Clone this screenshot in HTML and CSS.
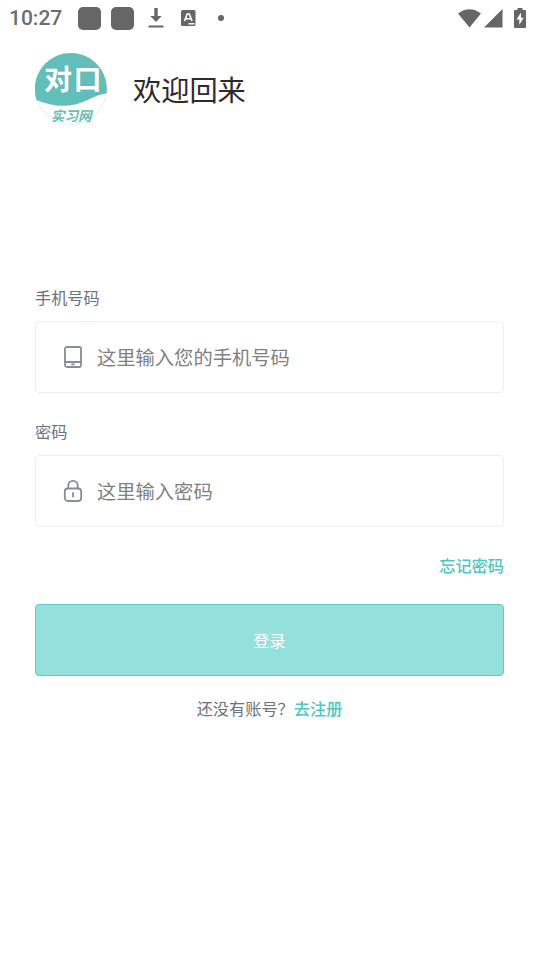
FILE: index.html
```html
<!DOCTYPE html>
<html lang="zh-CN">
<head>
<meta charset="utf-8">
<title>登录</title>
<link rel="stylesheet" href="styles.css">
</head>
<body>
<header class="status">
  <span class="time">10:27</span>
  <span class="app-block"></span>
  <span class="app-block second"></span>
  <svg class="download" width="16" height="20" viewBox="0 0 16 20"><path d="M6.3 0h3.4v8h4L8 14 2.3 8h4zM.5 17.5h15v2H.5z"/></svg>
  <svg class="letter" width="15" height="16" viewBox="0 0 15 16"><rect width="14.5" height="16" rx="1.5"/><path class="cut" d="M3.5 11 6.2 4h2.1L11 11M4.8 8.8h4.9M7.5 13.8h6"/></svg>
  <span class="dot"></span>
  <svg class="wifi" width="23" height="19" viewBox="0 0 23 19"><path d="M0 4.5Q11.5-4 23 4.5L11.5 18.5z"/></svg>
  <svg class="signal" width="19" height="19" viewBox="0 0 19 19"><path d="M18.5 0v18.5H0z"/></svg>
  <svg class="battery" width="12" height="20" viewBox="0 0 12 20"><path d="M3.5 0h5v2H11q1 0 1 1v16q0 1-1 1H1q-1 0-1-1V3q0-1 1-1h2.500z"/><path class="bolt" d="M7 4.500 2.500 11.500H5.300V17L9.700 9.800H7z"/></svg>
</header>
<main class="page">
  <div class="welcome">
    <svg class="logo" width="72" height="72" viewBox="0 0 72 72">
      <circle class="logo-base" cx="36" cy="36" r="35.5"/>
      <path class="logo-fill" d="M1.500 47A36 36 0 1 1 71.500 40.500C60 41.500 52 49 40 51.500 27 54.500 14 52 1.500 47z"/>
      <text class="logo-title" x="9" y="36.500">对</text>
      <text class="logo-title" x="38.500" y="36.500">口</text>
      <text class="logo-sub" x="16" y="67.500">实习网</text>
    </svg>
    <h1 class="title">欢迎回来</h1>
  </div>
  <form class="form">
    <label class="label" for="phone">手机号码</label>
    <div class="field">
      <svg class="field-icon" width="20" height="24" viewBox="0 0 20 24"><rect x="2" y="2" width="16" height="20" rx="1.800"/><path d="M2 17h16M9 19.300h2"/></svg>
      <input class="input" id="phone" type="tel" placeholder="这里输入您的手机号码">
    </div>
    <label class="label" for="password">密码</label>
    <div class="field">
      <svg class="field-icon" width="20" height="24" viewBox="0 0 20 24"><rect x="1.800" y="9.500" width="16.400" height="12.500" rx="3"/><path d="M5.300 9.500V6.500a4.700 4.700 0 0 1 9.400 0v3M10 14v3.500"/></svg>
      <input class="input" id="password" type="password" placeholder="这里输入密码">
    </div>
    <a class="link forgot">忘记密码</a>
    <button class="submit" type="button">登录</button>
    <p class="register">还没有账号？<a class="link">去注册</a></p>
  </form>
</main>
</body>
</html>
```
FILE: styles.css
```css
* { box-sizing: border-box; }
body {
  margin: 0;
  background: #fff;
  font-family: "Noto Sans CJK SC", sans-serif;
  color: #6b7280;
}
svg { display: block; flex: none; }
.status {
  display: flex;
  align-items: center;
  height: 36px;
  padding: 0 10px 0 9px;
  fill: #666;
}
.time {
  width: 69px;
  font: 500 21px/36px Roboto, sans-serif;
  color: #6c6c6c;
}
.app-block {
  width: 23px;
  height: 23px;
  border-radius: 5px;
  background: #666;
}
.second { margin-left: 10px; }
.download { margin-left: 14px; }
.letter { margin-left: 17px; }
.cut { fill: none; stroke: #fff; stroke-width: 1.6; }
.dot {
  width: 6px;
  height: 6px;
  margin-left: 22px;
  border-radius: 50%;
  background: #666;
}
.wifi { margin-left: auto; }
.signal { margin-left: 3px; }
.battery { margin-left: 11px; }
.bolt { fill: #fff; }
.page { padding: 17px 32px 0 35px; }
.welcome {
  display: flex;
  align-items: center;
  height: 72px;
}
.logo-base { fill: #fff; stroke: #e5eeee; stroke-width: 1; }
.logo-fill { fill: #62beb9; }
.logo-title { fill: #fff; font-size: 28px; font-weight: 700; }
.logo-sub {
  fill: #62beb9;
  font-size: 13.5px;
  font-weight: 700;
  font-style: italic;
}
.title {
  margin: 0 0 0 26px;
  font-size: 28.2px;
  font-weight: 400;
  line-height: 40px;
  color: #2e2a2b;
}
.form {
  display: flex;
  flex-direction: column;
  padding-top: 160px;
}
.label {
  height: 36px;
  font-size: 16.2px;
  line-height: 24px;
}
.field {
  display: flex;
  align-items: center;
  height: 72px;
  margin-bottom: 26px;
  padding: 0 27px;
  border: 1px solid #eee;
  border-radius: 4px;
}
.field-icon {
  fill: none;
  stroke: #858d98;
  stroke-width: 1.8;
  stroke-linecap: round;
}
.input {
  flex: 1;
  min-width: 0;
  height: 40px;
  margin-left: 14px;
  padding: 0;
  border: 0;
  outline: 0;
  background: none;
  font: 400 19.3px/40px "Noto Sans CJK SC", sans-serif;
}
.input::placeholder { color: #808080; opacity: 1; }
.link { color: #4bc8c0; font-weight: 500; }
.forgot {
  align-self: flex-end;
  height: 51px;
  font-size: 16.2px;
  line-height: 24px;
}
.submit {
  height: 72px;
  padding: 0;
  border: 1px solid #5fcac4;
  border-radius: 4px;
  background: #94e0dd;
  color: #fff;
  font: 400 16.2px/24px "Noto Sans CJK SC", sans-serif;
}
.register {
  margin: 20px 0 0;
  font-size: 16.2px;
  line-height: 24px;
  text-align: center;
}
```
